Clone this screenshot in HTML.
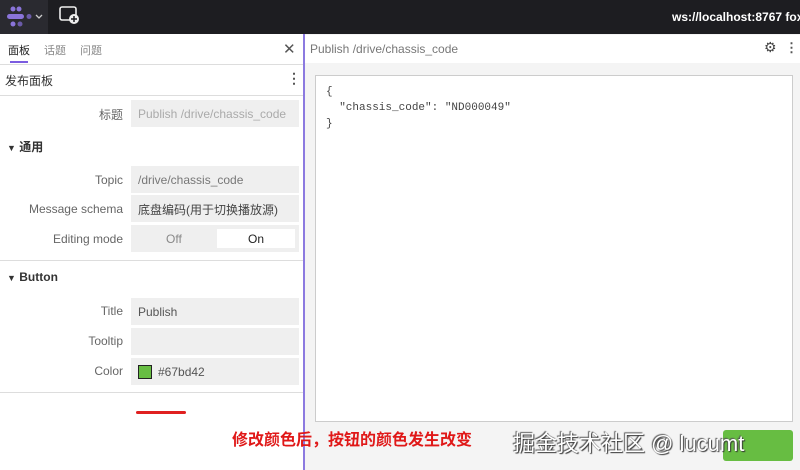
<html><head><style>
*{margin:0;padding:0;box-sizing:border-box}
body{width:800px;height:470px;overflow:hidden;background:#fff;font-family:"Liberation Sans","Noto Sans CJK SC",sans-serif;position:relative;font-size:12px;color:#333}
.a{position:absolute}
.lbl{position:absolute;right:677px;color:#666;font-size:12px;text-align:right;white-space:nowrap}
.in{position:absolute;left:131px;width:168px;height:27px;background:#efefef;color:#777;font-size:12px;padding:7px 0 0 7px;white-space:nowrap;overflow:hidden}
.hr{position:absolute;left:0;width:303px;height:1px;background:#ddd}
</style></head><body>
<div class="a" style="left:0;top:0;width:800px;height:34px;background:#1d1d21"></div>
<div class="a" style="left:0;top:0;width:48px;height:34px;background:#2a2a30"></div>
<svg class="a" style="left:6px;top:6px" width="40" height="22"><g fill="#8a74d9"><circle cx="7" cy="3" r="2.5"/><circle cx="13" cy="3" r="2.5"/><rect x="1" y="8" width="17" height="5" rx="2.5"/><circle cx="23" cy="10.5" r="2.5" fill="#6a5aa8"/><circle cx="7" cy="18" r="2.5"/><circle cx="14" cy="18" r="2.5" fill="#6a5aa8"/></g><path d="M30 9l3 3 3-3" stroke="#ccc" fill="none" stroke-width="1.3"/></svg>
<svg class="a" style="left:59px;top:6px" width="22" height="20"><rect x="1" y="1" width="16" height="13" rx="2" stroke="#eee" stroke-width="1.6" fill="none"/><circle cx="15" cy="13" r="5" fill="#eee"/><path d="M15 10v6M12 13h6" stroke="#1d1d21" stroke-width="1.5"/></svg>
<div class="a" style="left:672px;top:10px;color:#fff;font-size:12px;font-weight:bold;white-space:nowrap">ws://localhost:8767 fox</div>
<!-- left panel -->
<div class="a" style="left:8px;top:42px;font-size:11px;color:#222">面板</div>
<div class="a" style="left:44px;top:42px;font-size:11px;color:#888">话题</div>
<div class="a" style="left:80px;top:42px;font-size:11px;color:#888">问题</div>
<div class="a" style="left:10px;top:61px;width:18px;height:2px;background:#7b5ce0"></div>
<div class="a" style="left:283px;top:40px;font-size:15px;color:#555">✕</div>
<div class="hr" style="top:64px"></div>
<div class="a" style="left:5px;top:72px;font-size:12px;color:#333">发布面板</div>
<div class="a" style="left:287px;top:70px;font-size:14px;font-weight:bold;color:#555">⋮</div>
<div class="hr" style="top:95px"></div>
<div class="lbl" style="top:106px">标题</div><div class="in" style="top:100px;color:#aaa">Publish /drive/chassis_code</div>
<div class="a" style="left:7px;top:138px;font-size:12px;font-weight:bold;color:#333"><span style="font-size:9px">▼</span> 通用</div>
<div class="lbl" style="top:173px">Topic</div><div class="in" style="top:166px">/drive/chassis_code</div>
<div class="lbl" style="top:202px">Message schema</div><div class="in" style="top:195px;color:#444;padding-top:6px">底盘编码(用于切换播放源)</div>
<div class="lbl" style="top:232px">Editing mode</div><div class="in" style="top:225px;padding:0"><span class="a" style="left:35px;top:7px;color:#888">Off</span><span class="a" style="left:86px;top:4px;width:78px;height:19px;background:#fff;color:#222;text-align:center;padding-top:3px">On</span></div>
<div class="hr" style="top:260px"></div>
<div class="a" style="left:7px;top:270px;font-size:12px;font-weight:bold;color:#333"><span style="font-size:9px">▼</span> Button</div>
<div class="lbl" style="top:304px">Title</div><div class="in" style="top:298px;color:#555">Publish</div>
<div class="lbl" style="top:334px">Tooltip</div><div class="in" style="top:328px"></div>
<div class="lbl" style="top:364px">Color</div><div class="in" style="top:358px;color:#555"><span style="display:inline-block;width:14px;height:14px;background:#67bd42;border:1px solid #222;vertical-align:-3px;margin-right:6px"></span>#67bd42</div>
<div class="hr" style="top:392px"></div>
<!-- right -->
<div class="a" style="left:305px;top:34px;width:495px;height:436px;background:#f4f4f4"></div>
<div class="a" style="left:305px;top:35px;width:495px;height:28px;background:#fff"></div>
<div class="a" style="left:303px;top:34px;width:2px;height:436px;background:#8c7ae0"></div>
<div class="a" style="left:310px;top:42px;color:#777;font-size:12px">Publish /drive/chassis_code</div>
<div class="a" style="left:764px;top:39px;color:#444;font-size:14px">⚙</div>
<div class="a" style="left:785px;top:40px;color:#555;font-size:13px;font-weight:bold">⋮</div>
<div class="a" style="left:315px;top:75px;width:478px;height:347px;background:#fff;border:1px solid #ccc"></div>
<pre class="a" style="left:326px;top:84px;font-family:'Liberation Mono',monospace;font-size:11px;line-height:16px;color:#444">{
  "chassis_code": "ND000049"
}</pre>
<div class="a" style="left:723px;top:430px;width:70px;height:31px;background:#67bd42;border-radius:3px"></div>
<div class="a" style="left:513px;top:426px;color:#fff;font-size:22px;text-shadow:1px 1px 1px #333,-1px -1px 1px #555;white-space:nowrap">掘金技术社区 @ lucumt</div>
<div class="a" style="left:136px;top:411px;width:50px;height:3px;background:#e02020;border-radius:2px"></div>
<div class="a" style="left:232px;top:426px;color:#e01818;font-size:16px;font-weight:bold;white-space:nowrap">修改颜色后，按钮的颜色发生改变</div>
</body></html>
